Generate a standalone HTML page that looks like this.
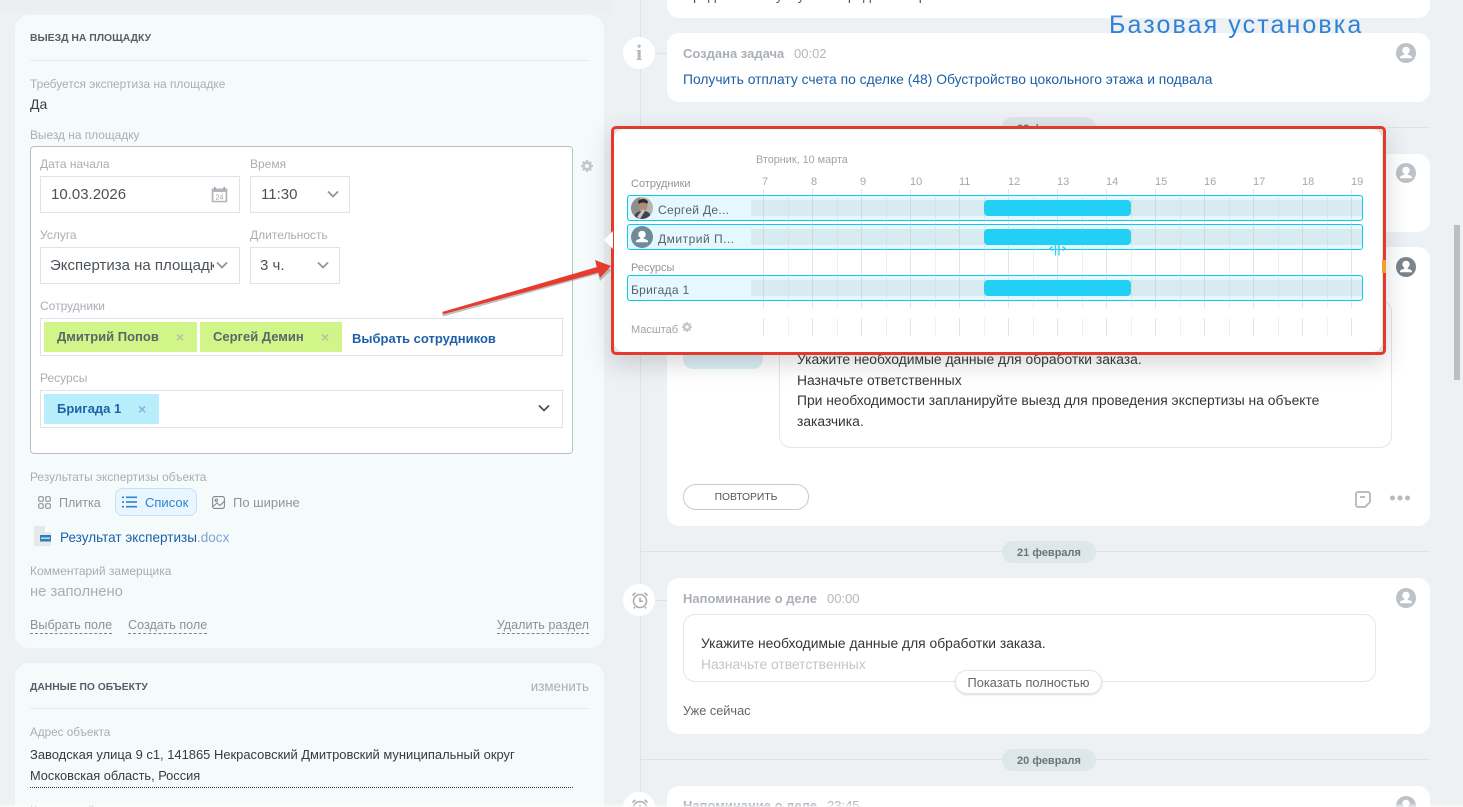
<!DOCTYPE html>
<html lang="ru"><head><meta charset="utf-8"><title>Выезд на площадку</title>
<style>
*{box-sizing:border-box}
html,body{margin:0;padding:0;width:1463px;height:807px;overflow:hidden}
body{position:relative;background:#edf1f4;font-family:"Liberation Sans","Noto Sans CJK SC",sans-serif;color:#333;font-size:13px}
#w{position:absolute;left:0;top:0;width:1463px;height:807px;overflow:hidden}
.a{position:absolute}
.t{position:absolute;white-space:nowrap;line-height:22px;height:22px}
.lb{font-size:11.900px;color:#a8aeb4}
.h{font-size:10.400px;font-weight:bold;color:#555f69}
.card{position:absolute;background:#fff;border-radius:12px}
.lc{position:absolute;background:#f5fbfb;border-radius:14px;left:15px;width:589px}
.sep{position:absolute;height:1px;background:#e6ebec}
.inp{position:absolute;background:#fff;border:1px solid #dfe2ea}
.tag{position:absolute;height:30px}
.dash{font-size:12.600px;color:#8b9299;border-bottom:1px dashed #7d848b;line-height:15px;height:16px;position:absolute;white-space:nowrap}
.circ{position:absolute;width:32px;height:32px;border-radius:50%;background:#fff;left:623px}
.ti{font-size:13px;font-weight:bold;color:#aab0b6}
.tm{font-size:13px;color:#b3b8bd}
.bd{font-size:13.850px;color:#363636}
.pill{position:absolute;left:1002px;width:94px;height:22px;border-radius:11px;background:#dde6e9;text-align:center;font-size:11px;font-weight:bold;color:#6d7477;line-height:24px}
.line{position:absolute;left:640px;width:790px;height:1px;background:#dde3e7}
.row{position:absolute;left:627px;width:736px;height:26px;border:1.5px solid #0cc8f5;border-radius:3px;background:#e5f8fe}
.bar{position:absolute;left:751px;width:611px;height:16px;background:#d8ebf1}
.blue{position:absolute;left:984px;width:147px;height:16px;background:#22cff5;border-radius:4px;z-index:3}
.hr{position:absolute;top:172px;font-size:11px;color:#a3a9ae;line-height:20px}
.pt{position:absolute;font-size:12px;line-height:22px;color:#54626c;white-space:nowrap;z-index:3}
</style></head><body><div id="w">
<svg width="0" height="0" style="position:absolute"><defs>
<symbol id="p" viewBox="0 0 20 20"><circle cx="10" cy="7.400" r="3.700" fill="#fff"/><path d="M8.300 10.500v1.200c-2.400.6-4.300 1.300-4.300 2.700v.9h12v-.9c0-1.400-1.900-2.100-4.300-2.700v-1.200z" fill="#fff"/></symbol>
<symbol id="g" viewBox="0 0 12 12"><path fill-rule="evenodd" d="M5 0h2l.3 1.600 1.100.5L9.800 1.200l1.100 1.100-.9 1.400.5 1.100L12 5v2l-1.500.3-.5 1.100.9 1.400-1.100 1.100-1.400-.9-1.100.5L7 12H5l-.3-1.500-1.100-.5-1.400.9-1.100-1.100.9-1.400-.5-1.100L0 7V5l1.500-.3.5-1.100-.9-1.400 1.100-1.100 1.400.9 1.100-.5zM6 4a2 2 0 100 4 2 2 0 000-4z" fill="#c3c8cc"/></symbol>
<symbol id="al" viewBox="0 0 20 20"><circle cx="10" cy="11" r="6.500" fill="none" stroke="#a9aeb2" stroke-width="1.600"/><path d="M10 7.500V11.300h3M2.500 5.500L5.500 2.800M17.500 5.500L14.500 2.800M5 17l-1.200 1.500M15 17l1.200 1.500" fill="none" stroke="#a9aeb2" stroke-width="1.600"/></symbol>
<symbol id="ch" viewBox="0 0 12 8"><path d="M1 1.500L6 6.500L11 1.500" fill="none" stroke="currentColor" stroke-width="1.800"/></symbol>
</defs></svg>

<div class="a" style="left:0;top:0;width:612px;height:13px;background:#ebeff2"></div>

<!-- LEFT CARD 1 -->
<div class="lc" style="top:15px;height:633px"></div>
<div class="t h" style="left:30px;top:28px">ВЫЕЗД НА ПЛОЩАДКУ</div>
<div class="sep" style="left:30px;top:60px;width:559px"></div>
<div class="t lb" style="left:30px;top:73px">Требуется экспертиза на площадке</div>
<div class="t" style="left:30px;top:93px;font-size:14px;color:#3a3f44">Да</div>
<div class="t lb" style="left:30px;top:124px">Выезд на площадку</div>

<div class="a" style="left:30px;top:146px;width:543px;height:308px;background:#fff;border:1px solid #b9c0c6;border-radius:4px"></div>
<svg class="a" style="left:581px;top:160px" width="12" height="12"><use href="#g"/></svg>

<div class="t lb" style="left:40px;top:153px;font-size:12px">Дата начала</div>
<div class="inp" style="left:40px;top:176px;width:200px;height:37px"></div>
<div class="t" style="left:51px;top:184px;font-size:15px;color:#4b5359">10.03.2026</div>
<svg class="a" style="left:211px;top:186px" width="17" height="17" viewBox="0 0 17 17"><rect x="0.700" y="2.500" width="15.600" height="13.800" fill="#b3b7bb"/><rect x="2.500" y="6" width="12" height="8.800" fill="#fff"/><rect x="3" y="0.800" width="1.600" height="3" fill="#9ea3a7"/><rect x="12.400" y="0.800" width="1.600" height="3" fill="#9ea3a7"/><text x="8.500" y="13.300" font-size="7" font-family="Liberation Sans" text-anchor="middle" fill="#9a9fa3">24</text></svg>

<div class="t lb" style="left:250px;top:153px;font-size:12px">Время</div>
<div class="inp" style="left:250px;top:176px;width:100px;height:37px"></div>
<div class="t" style="left:261px;top:184px;font-size:15px;color:#4b5359">11:30</div>
<svg class="a" style="left:327px;top:190px;color:#8e959b" width="12" height="8"><use href="#ch"/></svg>

<div class="t lb" style="left:40px;top:224px;font-size:12px">Услуга</div>
<div class="inp" style="left:40px;top:247px;width:200px;height:37px"></div>
<div class="t" style="left:50px;top:255px;font-size:15px;color:#4b5359;width:164px;overflow:hidden">Экспертиза на площадке</div>
<svg class="a" style="left:216px;top:261px;color:#8e959b" width="12" height="8"><use href="#ch"/></svg>

<div class="t lb" style="left:250px;top:224px;font-size:12px">Длительность</div>
<div class="inp" style="left:250px;top:247px;width:90px;height:37px"></div>
<div class="t" style="left:260px;top:255px;font-size:15px;color:#4b5359">3 ч.</div>
<svg class="a" style="left:317px;top:261px;color:#8e959b" width="12" height="8"><use href="#ch"/></svg>

<div class="t lb" style="left:40px;top:295px;font-size:12px">Сотрудники</div>
<div class="inp" style="left:40px;top:318px;width:523px;height:38px"></div>
<div class="tag" style="left:44px;top:322px;width:153px;background:#d2f58a"></div>
<div class="t" style="left:57px;top:326px;font-size:13px;font-weight:bold;color:#596768">Дмитрий Попов</div>
<div class="t" style="left:176px;top:326px;font-size:14px;font-weight:bold;color:#b5c6a0">×</div>
<div class="tag" style="left:200px;top:322px;width:142px;background:#d2f58a"></div>
<div class="t" style="left:213px;top:326px;font-size:13px;font-weight:bold;color:#596768">Сергей Демин</div>
<div class="t" style="left:321px;top:326px;font-size:14px;font-weight:bold;color:#b5c6a0">×</div>
<div class="t" style="left:352px;top:328px;font-size:13px;font-weight:bold;color:#1f5fa8">Выбрать сотрудников</div>

<div class="t lb" style="left:40px;top:367px;font-size:12px">Ресурсы</div>
<div class="inp" style="left:40px;top:390px;width:523px;height:38px"></div>
<div class="tag" style="left:44px;top:394px;width:115px;background:#b8edfc"></div>
<div class="t" style="left:57px;top:398px;font-size:13px;font-weight:bold;color:#1f63a8">Бригада 1</div>
<div class="t" style="left:138px;top:398px;font-size:14px;font-weight:bold;color:#80b8dc">×</div>
<svg class="a" style="left:538px;top:404px;color:#4c5359" width="12" height="8"><use href="#ch"/></svg>

<div class="t lb" style="left:30px;top:466px">Результаты экспертизы объекта</div>
<svg class="a" style="left:38px;top:496px" width="13" height="13" viewBox="0 0 13 13" fill="none" stroke="#92989d" stroke-width="1.200"><rect x="0.700" y="0.700" width="4.600" height="4.600" rx="1.400"/><rect x="7.700" y="0.700" width="4.600" height="4.600" rx="1.400"/><rect x="0.700" y="7.700" width="4.600" height="4.600" rx="1.400"/><rect x="7.700" y="7.700" width="4.600" height="4.600" rx="1.400"/></svg>
<div class="t" style="left:59px;top:492px;font-size:12.500px;color:#8e959b">Плитка</div>
<div class="a" style="left:115px;top:488px;width:82px;height:28px;background:#e9f5ff;border:1px solid #bfe3fb;border-radius:8px"></div>
<svg class="a" style="left:122px;top:496px" width="15" height="12" viewBox="0 0 15 12" fill="#2a84d0"><rect x="0" y="0.500" width="2" height="1.600"/><rect x="4" y="0.500" width="11" height="1.600"/><rect x="0" y="5.200" width="2" height="1.600"/><rect x="4" y="5.200" width="11" height="1.600"/><rect x="0" y="9.900" width="2" height="1.600"/><rect x="4" y="9.900" width="11" height="1.600"/></svg>
<div class="t" style="left:145px;top:492px;font-size:13px;color:#2a84d0">Список</div>
<svg class="a" style="left:212px;top:496px" width="13" height="13" viewBox="0 0 13 13" fill="none" stroke="#83898e" stroke-width="1.100"><rect x="0.600" y="0.600" width="11.800" height="11.800" rx="2"/><circle cx="4.300" cy="4.300" r="1.200"/><path d="M1 10.500L5 7L8 9.500L12 5.500"/></svg>
<div class="t" style="left:233px;top:492px;font-size:13px;color:#8e959b">По ширине</div>

<svg class="a" style="left:34px;top:526px" width="18" height="20" viewBox="0 0 18 20"><path d="M0 0h11l6 6v14H0z" fill="#e5e9eb"/><path d="M11 0l6 6h-6z" fill="#fff"/><rect x="6" y="9" width="11" height="6.500" fill="#2f7fb8"/><rect x="7" y="11.500" width="9" height="1.400" fill="#cfe3ef"/></svg>
<div class="t" style="left:60px;top:527px;font-size:13.550px;color:#1c5fa8">Результат экспертизы<span style="color:#7ea2d6">.docx</span></div>

<div class="t lb" style="left:30px;top:560px;font-size:12px">Комментарий замерщика</div>
<div class="t" style="left:30px;top:581px;font-size:14.800px;color:#a8aeb4">не заполнено</div>
<div class="dash" style="left:30px;top:618px">Выбрать поле</div>
<div class="dash" style="left:128px;top:618px">Создать поле</div>
<div class="dash" style="right:874px;top:618px">Удалить раздел</div>

<!-- LEFT CARD 2 -->
<div class="lc" style="top:663px;height:160px"></div>
<div class="t h" style="left:30px;top:677px;font-size:10.300px">ДАННЫЕ ПО ОБЪЕКТУ</div>
<div class="t" style="right:874px;top:676px;font-size:13.400px;color:#a8aeb4">изменить</div>
<div class="sep" style="left:30px;top:708px;width:559px"></div>
<div class="t lb" style="left:30px;top:722px;font-size:11.700px">Адрес объекта</div>
<div class="t" style="left:30px;top:744px;font-size:12.950px;color:#363b40">Заводская улица 9 с1, 141865 Некрасовский Дмитровский муниципальный округ</div>
<div class="t" style="left:30px;top:765px;font-size:12.800px;color:#363b40">Московская область, Россия</div>
<div class="a" style="left:30px;top:787px;width:543px;border-top:1px dotted #333"></div>
<div class="t lb" style="left:30px;top:799px">Контактный</div>

<!-- TIMELINE -->
<div class="a" style="left:640px;top:0;width:1px;height:807px;background:#dde3e7"></div>
<div class="line" style="top:127px"></div>
<div class="line" style="top:551px"></div>
<div class="line" style="top:759px"></div>

<div class="card" style="left:667px;top:-40px;width:763px;height:58px;overflow:hidden">
  <div class="t" style="left:16px;top:24px;font-size:13.850px;color:#555">Предоставьте услуги и определите сроки выполнения</div>
</div>

<div class="a" style="left:640px;top:53px;width:27px;height:1px;background:#dde3e7"></div>
<div class="circ" style="top:37px"></div>
<div class="t" style="left:623px;top:42px;width:32px;text-align:center;font-family:'Liberation Serif',serif;font-weight:bold;font-size:22px;color:#b5babe">i</div>
<div class="card" style="left:667px;top:33px;width:763px;height:69px"></div>
<div class="t ti" style="left:683px;top:43px">Создана задача</div>
<div class="t tm" style="left:794px;top:43px">00:02</div>
<div class="t" style="left:683px;top:68px;font-size:13.850px;color:#1c5fa8">Получить отплату счета по сделке (48) Обустройство цокольного этажа и подвала</div>
<svg class="a" style="left:1396px;top:43px" width="20" height="20"><circle cx="10" cy="10" r="10" fill="#bdc2c8"/><use href="#p"/></svg>
<div class="t" style="left:1109px;top:10px;font-size:25px;letter-spacing:2.100px;line-height:30px;height:30px;color:#2f82d6">Базовая установка</div>

<div class="pill" style="top:117px">22 февраля</div>

<div class="card" style="left:667px;top:154px;width:763px;height:78px"></div>
<svg class="a" style="left:1396px;top:163px" width="20" height="20"><circle cx="10" cy="10" r="10" fill="#bdc2c8"/><use href="#p"/></svg>

<div class="card" style="left:667px;top:247px;width:763px;height:279px"></div>
<svg class="a" style="left:1396px;top:257px" width="20" height="20"><circle cx="10" cy="10" r="10" fill="#7a848d"/><use href="#p"/></svg>
<div class="a" style="left:683px;top:320px;width:80px;height:49px;background:#dcf0f4;border-radius:10px"></div>
<div class="a" style="left:779px;top:300px;width:613px;height:148px;border:1px solid #e3e6ea;border-radius:12px;background:#fff"></div>
<div class="t bd" style="left:797px;top:348px">Укажите необходимые данные для обработки заказа.</div>
<div class="t bd" style="left:797px;top:369px">Назначьте ответственных</div>
<div class="t bd" style="left:797px;top:389px">При необходимости запланируйте выезд для проведения экспертизы на объекте</div>
<div class="t bd" style="left:797px;top:410px">заказчика.</div>
<div class="a" style="left:683px;top:484px;width:126px;height:26px;border:1px solid #c5cbd2;border-radius:13px;text-align:center;font-size:10.300px;line-height:25px;color:#555">ПОВТОРИТЬ</div>
<svg class="a" style="left:1355px;top:491px" width="16" height="17" viewBox="0 0 16 17" fill="none" stroke="#b0b5ba" stroke-width="1.700"><path d="M3 1h10a2 2 0 012 2v8l-5 5H3a2 2 0 01-2-2V3a2 2 0 012-2z"/><path d="M5 6h5"/></svg>
<svg class="a" style="left:1389px;top:495px" width="22" height="6" fill="#b5babe"><circle cx="3.500" cy="3" r="2.500"/><circle cx="11" cy="3" r="2.500"/><circle cx="18.500" cy="3" r="2.500"/></svg>

<div class="pill" style="top:541px">21 февраля</div>

<div class="a" style="left:640px;top:600px;width:27px;height:1px;background:#dde3e7"></div>
<div class="circ" style="top:584px"></div>
<svg class="a" style="left:630px;top:590px" width="20" height="20"><use href="#al"/></svg>
<div class="card" style="left:667px;top:578px;width:763px;height:156px"></div>
<div class="t ti" style="left:683px;top:588px">Напоминание о деле</div>
<div class="t tm" style="left:827px;top:588px">00:00</div>
<svg class="a" style="left:1396px;top:588px" width="20" height="20"><circle cx="10" cy="10" r="10" fill="#bdc2c8"/><use href="#p"/></svg>
<div class="a" style="left:683px;top:614px;width:693px;height:68px;border:1px solid #e3e6ea;border-radius:12px"></div>
<div class="t bd" style="left:701px;top:632px">Укажите необходимые данные для обработки заказа.</div>
<div class="t bd" style="left:701px;top:653px;color:#c3c5c7">Назначьте ответственных</div>
<div class="a" style="left:955px;top:670px;width:147px;height:24px;background:#fff;border-radius:12px;border:1px solid #e3e6ea;box-shadow:0 1px 2px rgba(0,0,0,.15);text-align:center;font-size:12.800px;line-height:23px;color:#666">Показать полностью</div>
<div class="t" style="left:683px;top:700px;font-size:12.750px;color:#666">Уже сейчас</div>

<div class="pill" style="top:749px">20 февраля</div>

<div class="circ" style="top:792px"></div>
<svg class="a" style="left:630px;top:797px" width="20" height="20"><use href="#al"/></svg>
<div class="card" style="left:667px;top:786px;width:763px;height:60px"></div>
<div class="t ti" style="left:683px;top:795px">Напоминание о деле</div>
<div class="t tm" style="left:827px;top:795px">23:45</div>
<svg class="a" style="left:1396px;top:796px" width="20" height="20"><circle cx="10" cy="10" r="10" fill="#bdc2c8"/><use href="#p"/></svg>

<!-- scrollbar -->
<div class="a" style="left:1454px;top:225px;width:6px;height:155px;background:#bcbfbf"></div>

<!-- POPUP -->
<div class="a" style="left:604px;top:231px;width:0;height:0;border-top:9px solid transparent;border-bottom:9px solid transparent;border-right:9px solid #fff;z-index:6"></div>
<div class="a" style="left:611px;top:126px;width:775px;height:229px;background:#dfe3e5;border-radius:4px;box-shadow:0 8px 24px rgba(40,50,60,.2)"></div>
<div class="a" style="left:1382px;top:260px;width:4px;height:13px;background:#f0a030;z-index:4"></div>
<div class="a" style="left:611px;top:126px;width:775px;height:229px;border:3px solid #e33a2e;border-radius:5px;z-index:3"></div>
<div class="a" style="left:614px;top:129px;width:768px;height:223px;background:#fff;border-radius:10px"></div>

<div class="t" style="left:756px;top:149px;font-size:10.850px;color:#9ea4a9">Вторник, 10 марта</div>
<div class="t" style="left:631px;top:173px;font-size:11px;color:#8f969c">Сотрудники</div>
<div class="hr" style="left:762px">7</div><div class="hr" style="left:811px">8</div><div class="hr" style="left:860px">9</div><div class="hr" style="left:910px">10</div><div class="hr" style="left:959px">11</div><div class="hr" style="left:1008px">12</div><div class="hr" style="left:1057px">13</div><div class="hr" style="left:1106px">14</div><div class="hr" style="left:1155px">15</div><div class="hr" style="left:1204px">16</div><div class="hr" style="left:1253px">17</div><div class="hr" style="left:1302px">18</div><div class="hr" style="left:1351px">19</div>

<div class="row" style="top:195px"></div>
<div class="row" style="top:224px"></div>
<div class="row" style="top:275px"></div>
<div class="bar" style="top:200px"></div><div class="bar" style="top:229px"></div><div class="bar" style="top:280px"></div>
<div class="blue" style="top:200px"></div><div class="blue" style="top:229px"></div><div class="blue" style="top:280px"></div>

<svg class="a" style="left:750px;top:185px;z-index:2" width="620" height="155" fill="none">
<g stroke="#bcc6cb" stroke-opacity=".45" stroke-width="1">
<path d="M13.500 4V123M13.500 133V151M62.500 4V123M62.500 133V151M111.500 4V123M111.500 133V151M160.500 4V123M160.500 133V151M209.500 4V123M209.500 133V151M258.500 4V123M258.500 133V151M307.500 4V123M307.500 133V151M356.500 4V123M356.500 133V151M405.500 4V123M405.500 133V151M454.500 4V123M454.500 133V151M503.500 4V123M503.500 133V151M552.500 4V123M552.500 133V151M601.500 4V123M601.500 133V151"/>
</g>
<g stroke="#c8ced2" stroke-opacity=".3" stroke-width="1">
<path d="M38.500 10V123M38.500 133V151M87.500 10V123M87.500 133V151M136.500 10V123M136.500 133V151M185.500 10V123M185.500 133V151M234.500 10V123M234.500 133V151M283.500 10V123M283.500 133V151M332.500 10V123M332.500 133V151M381.500 10V123M381.500 133V151M430.500 10V123M430.500 133V151M479.500 10V123M479.500 133V151M528.500 10V123M528.500 133V151M577.500 10V123M577.500 133V151"/>
</g>
</svg>

<!-- avatars -->
<svg class="a" style="left:631px;top:197px;z-index:3" width="22" height="22" viewBox="0 0 22 22"><defs><clipPath id="c"><circle cx="11" cy="11" r="11"/></clipPath></defs><g clip-path="url(#c)"><rect width="22" height="22" fill="#b9b5ad"/><rect x="0" y="0" width="9" height="22" fill="#8d8f8c"/><ellipse cx="12" cy="8.500" rx="4.500" ry="5.500" fill="#a98e7c"/><path d="M7 5c1-4 9-4 10 0l-1 2c-2-2-6-2-8 0z" fill="#2e2b29"/><path d="M3 22c0-6 4-8 9-8s8 2 8 8z" fill="#3c4650"/><path d="M6 20l6-8 2 2-5 8z" fill="#c9c2ba"/></g></svg>
<div class="pt" style="left:658px;top:199px;letter-spacing:.300px">Сергей Де...</div>
<svg class="a" style="left:631px;top:226px;z-index:3" width="22" height="22"><circle cx="11" cy="11" r="11" fill="#6f8a99"/><svg x="1" y="1" width="20" height="20"><use href="#p"/></svg></svg>
<div class="pt" style="left:658px;top:228px;letter-spacing:.500px">Дмитрий П...</div>
<div class="t" style="left:631px;top:257px;font-size:11px;color:#8f969c">Ресурсы</div>
<div class="pt" style="left:631px;top:279px;letter-spacing:.300px">Бригада 1</div>
<div class="t" style="left:631px;top:319px;font-size:11px;color:#9ea4a9">Масштаб</div>
<svg class="a" style="left:682px;top:322px" width="10" height="10"><use href="#g"/></svg>

<svg class="a" style="left:1049px;top:245px;z-index:4" width="17" height="11" viewBox="0 0 17 11" fill="none" stroke="#22cff5" stroke-width="1.300"><path d="M6.500 0V10.500M10 0V10.500M3.500 1.500L1 3.500L3.500 5.500M13.500 1.500L16 3.500L13.500 5.500"/></svg>

<!-- ARROW -->
<svg class="a" style="left:430px;top:250px;z-index:7" width="190" height="75" viewBox="430 250 190 75">
<path d="M443 315L598 272.500L600 279.500L611.500 268.500L595.500 261.500L597 267.500L442 311.500z" fill="#8a8f92" opacity=".55" transform="translate(0,1.500)"/>
<path d="M442 312L597 267L595 260L611 266L600 278L598.500 272.500L444 314z" fill="#e63b2e"/>
</svg>

<div class="a" style="left:0;top:803px;width:1463px;height:4px;background:linear-gradient(rgba(255,255,255,0),rgba(255,255,255,.7));z-index:9"></div>
</div></body></html>
